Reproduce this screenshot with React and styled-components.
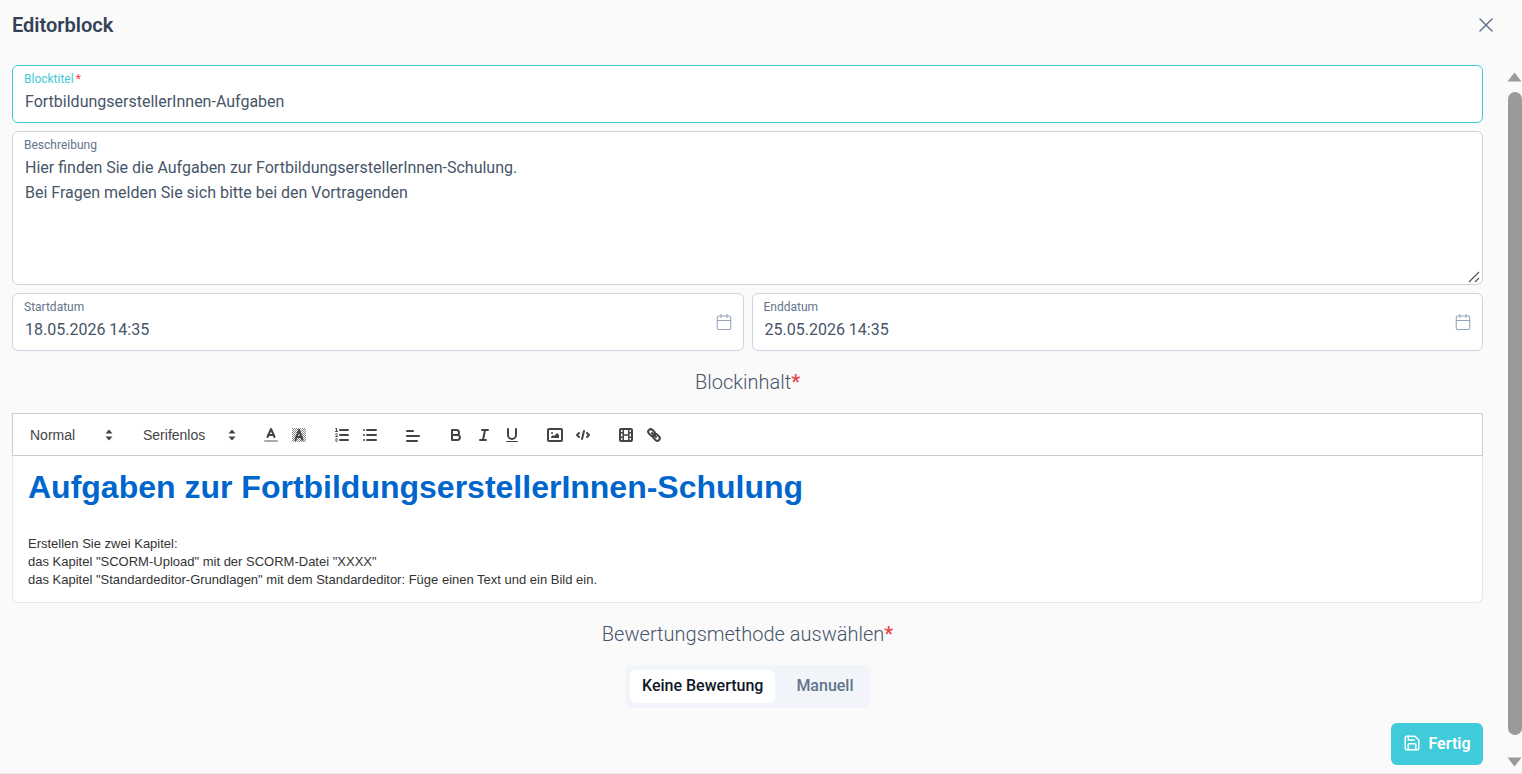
import React from "react";
import styled, { createGlobalStyle } from "styled-components";
import { X, Calendar, Save } from "lucide-react";

const GlobalStyle = createGlobalStyle`
  html, body {
    margin: 0;
    height: 100%;
    overflow: hidden;
    background: #fafafb;
    font-family: Roboto, "Liberation Sans", sans-serif;
  }
  * { box-sizing: border-box; }
`;

const Page = styled.div`
  width: 1522px;
  height: 774px;
  display: flex;
  flex-direction: column;
  background: #fafafb;
  border-bottom: 1px solid #e5e7eb;
`;

const Header = styled.header`
  height: 50px;
  flex: none;
  display: flex;
  align-items: center;
  justify-content: space-between;
  padding: 0 24px 0 12px;
`;

const Title = styled.h1`
  margin: 0;
  font-size: 20px;
  line-height: 28px;
  font-weight: 600;
  color: #334155;
`;

const CloseButton = styled.button`
  display: flex;
  padding: 0;
  border: 0;
  background: none;
  color: #64748b;
`;

const Body = styled.div`
  flex: 1;
  display: flex;
  min-height: 0;
`;

const Form = styled.main`
  width: 1483px;
  flex: none;
  padding: 15px 0 0 12px;
  display: flex;
  flex-direction: column;
  gap: 8px;
`;

const Field = styled.div`
  position: relative;
  flex: ${(p) => (p.$grow ? 1 : "none")};
  height: ${(p) => p.$height || 58}px;
  padding: 5px 11px 0 11px;
  background: #fff;
  border: 1px solid ${(p) => (p.$focused ? "#3ecad9" : "#cbd5e1")};
  border-radius: 6px;
`;

const FieldLabel = styled.label`
  display: block;
  font-size: 12px;
  line-height: 16px;
  margin-bottom: 2px;
  color: ${(p) => (p.$focused ? "#3ecad9" : "#64748b")};
`;

const Star = styled.span`
  color: #ef4444;
  margin-left: 2px;
`;

const FieldValue = styled.div`
  font-size: 16px;
  line-height: 25px;
  color: #475569;
  white-space: pre-line;
  padding-left: 1px;
`;

const DateRow = styled.div`
  display: flex;
  gap: 8px;
`;

const CalendarIcon = styled(Calendar)`
  position: absolute;
  right: 10px;
  top: 19px;
  color: #94a3b8;
`;

const ResizeGrip = styled.svg`
  position: absolute;
  right: 1px;
  bottom: 1px;
`;

const SectionLabel = styled.div`
  text-align: center;
  font-size: 20px;
  line-height: 28px;
  font-weight: 300;
  color: #475569;
  margin-top: ${(p) => p.$top}px;
  margin-bottom: ${(p) => p.$bottom}px;
`;

const SectionStar = styled.span`
  color: #ef4444;
  font-weight: 500;
`;

const Editor = styled.section`
  display: flex;
  flex-direction: column;
`;

const Toolbar = styled.div`
  height: 43px;
  display: flex;
  align-items: center;
  padding: 0 8px;
  gap: 15px;
  background: #fff;
  border: 1px solid #ccc;
`;

const ToolGroup = styled.div`
  display: flex;
  align-items: center;
`;

const Picker = styled.div`
  width: ${(p) => p.$width}px;
  height: 24px;
  display: flex;
  align-items: center;
  justify-content: space-between;
  padding: 0 6px 0 9px;
  font-family: "Liberation Sans", Arial, sans-serif;
  font-size: 14px;
  color: #444;
`;

const ToolButton = styled.button`
  width: 28px;
  height: 24px;
  padding: 3px 5px;
  border: 0;
  background: none;
  display: flex;
  align-items: center;
  justify-content: center;
  & svg {
    width: 18px;
    height: 18px;
    fill: none;
    stroke: #444;
    stroke-width: 2;
    stroke-linecap: round;
    stroke-linejoin: round;
    flex: none;
  }
  & .thin { stroke-width: 1; }
  & .solid { fill: #444; stroke: none; }
  & .speck { fill: #888; stroke: none; }
  & .hatched { stroke: none; fill: url(#hatch); }
  & .muted { stroke: #a8a8a8; }
`;

const EditorContent = styled.div`
  height: 147px;
  padding: 12px 15px;
  background: #fff;
  border: 1px solid #e2e8f0;
  border-top: 0;
  border-radius: 0 0 6px 6px;
  font-family: "Liberation Sans", Arial, sans-serif;
  font-size: 13px;
  line-height: 18px;
  color: #333;
`;

const EditorHeading = styled.h1`
  margin: 0 0 29px;
  font-size: 32px;
  line-height: 38px;
  font-weight: 700;
  color: #0066cc;
`;

const Segmented = styled.div`
  align-self: center;
  width: 245px;
  height: 43px;
  padding: 5px;
  display: flex;
  gap: 9px;
  background: #f1f5f9;
  border-radius: 6px;
`;

const Segment = styled.div`
  flex: none;
  padding: 0 12px 2px;
  display: flex;
  align-items: center;
  white-space: nowrap;
  font-size: 16px;
  font-weight: 500;
  border-radius: 6px;
  color: ${(p) => (p.$active ? "#0f172a" : "#64748b")};
  background: ${(p) => (p.$active ? "#fff" : "transparent")};
`;

const Footer = styled.div`
  display: flex;
  justify-content: flex-end;
  margin-top: 7px;
`;

const DoneButton = styled.button`
  width: 92px;
  height: 42px;
  padding: 0 0 2px;
  display: flex;
  align-items: center;
  justify-content: center;
  gap: 7px;
  border: 0;
  border-radius: 6px;
  background: #40cbdb;
  color: #fff;
  font-family: inherit;
  font-size: 16px;
  font-weight: 600;
`;

const Rail = styled.aside`
  width: 15px;
  margin-left: 24px;
  flex: none;
  display: flex;
  flex-direction: column;
  align-items: flex-end;
  padding-top: 22px;
  padding-bottom: 6px;
`;

const RailThumb = styled.div`
  width: 14px;
  flex: 1;
  margin: 10px 0 22px;
  border-radius: 7px;
  background: #9a9a9a;
`;

const ColorIcon = () => (
  <svg viewBox="0 0 18 18">
    <line className="muted" x1="3" x2="15" y1="15" y2="15" />
    <polyline points="5.5 11 9 3 12.5 11" />
    <line x1="11.63" x2="6.38" y1="9" y2="9" />
  </svg>
);

const BackgroundIcon = () => (
  <svg viewBox="0 0 18 18">
    <defs>
      <pattern id="hatch" width="2" height="2" patternUnits="userSpaceOnUse">
        <rect className="speck" width="1" height="1" />
        <rect className="speck" x="1" y="1" width="1" height="1" />
      </pattern>
    </defs>
    <rect className="hatched" x="2" y="2" width="14" height="14" />
    <polyline points="5.5 14 9 4 12.5 14" />
    <line x1="11.63" x2="6.38" y1="11" y2="11" />
  </svg>
);

const OrderedIcon = () => (
  <svg viewBox="0 0 18 18">
    <line x1="7" x2="15" y1="4" y2="4" />
    <line x1="7" x2="15" y1="9" y2="9" />
    <line x1="7" x2="15" y1="14" y2="14" />
    <line className="thin" x1="2.5" x2="4.5" y1="5.5" y2="5.5" />
    <path className="solid" d="M3.5,6A0.5,0.5,0,0,1,3,5.5V3.085l-0.276.138A0.5,0.5,0,0,1,2.053,3c-0.124-.247-0.023-0.324.224-0.447l1-.5A0.5,0.5,0,0,1,4,2.5v3A0.5,0.5,0,0,1,3.5,6Z" />
    <path className="thin" d="M4.5,10.5h-2c0-.234,1.85-1.076,1.85-2.234A0.959,0.959,0,0,0,2.5,8.156" />
    <path className="thin" d="M2.5,14.846a0.959,0.959,0,0,0,1.85-.109A0.7,0.7,0,0,0,3.75,14a0.688,0.688,0,0,0,.6-0.736,0.959,0.959,0,0,0-1.85-.109" />
  </svg>
);

const BulletIcon = () => (
  <svg viewBox="0 0 18 18">
    <line x1="6" x2="15" y1="4" y2="4" />
    <line x1="6" x2="15" y1="9" y2="9" />
    <line x1="6" x2="15" y1="14" y2="14" />
    <line x1="3" x2="3" y1="4" y2="4" />
    <line x1="3" x2="3" y1="9" y2="9" />
    <line x1="3" x2="3" y1="14" y2="14" />
  </svg>
);

const AlignIcon = () => (
  <svg viewBox="0 0 18 18">
    <line x1="3" x2="9" y1="5" y2="5" />
    <line x1="3" x2="15" y1="10" y2="10" />
    <line x1="3" x2="13" y1="15" y2="15" />
  </svg>
);

const BoldIcon = () => (
  <svg viewBox="0 0 18 18">
    <path d="M5,4H9.5A2.5,2.5,0,0,1,12,6.5v0A2.5,2.5,0,0,1,9.5,9H5A0,0,0,0,1,5,9V4A0,0,0,0,1,5,4Z" />
    <path d="M5,9h5.5A2.5,2.5,0,0,1,13,11.5v0A2.5,2.5,0,0,1,10.5,14H5a0,0,0,0,1,0,0V9A0,0,0,0,1,5,9Z" />
  </svg>
);

const ItalicIcon = () => (
  <svg viewBox="0 0 18 18">
    <line x1="7" x2="13" y1="4" y2="4" />
    <line x1="5" x2="11" y1="14" y2="14" />
    <line x1="8" x2="10" y1="14" y2="4" />
  </svg>
);

const UnderlineIcon = () => (
  <svg viewBox="0 0 18 18">
    <path d="M5,3V9a4.012,4.012,0,0,0,4,4H9a4.012,4.012,0,0,0,4-4V3" />
    <rect className="solid" x="3" y="15" width="12" height="1" rx="0.5" />
  </svg>
);

const ImageIcon = () => (
  <svg viewBox="0 0 18 18">
    <rect x="2" y="3" width="14" height="12" rx="1" />
    <circle className="solid" cx="6" cy="7" r="1" />
    <polyline className="solid" points="5 12 5 11 7 9 8 10 11 7 13 9 13 12 5 12" />
  </svg>
);

const CodeIcon = () => (
  <svg viewBox="0 0 18 18">
    <polyline points="5 7 3 9 5 11" />
    <polyline points="13 7 15 9 13 11" />
    <line x1="10" x2="8" y1="5" y2="13" />
  </svg>
);

const VideoIcon = () => (
  <svg viewBox="0 0 18 18">
    <rect x="3" y="3" width="12" height="12" rx="1" />
    <rect className="solid" x="5.5" y="3" width="1.5" height="12" />
    <rect className="solid" x="11" y="3" width="1.5" height="12" />
    <rect className="solid" x="3" y="6" width="3" height="1.5" />
    <rect className="solid" x="3" y="10.5" width="3" height="1.5" />
    <rect className="solid" x="12" y="6" width="3" height="1.5" />
    <rect className="solid" x="12" y="10.5" width="3" height="1.5" />
    <rect className="solid" x="6" y="8.25" width="6" height="1.5" />
  </svg>
);

const LinkIcon = () => (
  <svg viewBox="0 0 18 18">
    <line x1="7" x2="11" y1="7" y2="11" />
    <rect x="2.85" y="4.1" width="7.5" height="5" rx="2.5" transform="rotate(45 6.6 6.6)" />
    <rect x="7.65" y="8.9" width="7.5" height="5" rx="2.5" transform="rotate(45 11.4 11.4)" />
  </svg>
);

const PickerArrows = () => (
  <svg width="8" height="12" viewBox="0 0 8 12" fill="#444">
    <path d="M4 0.5 7.5 4.5 0.5 4.5Z" />
    <path d="M4 11.5 7.5 7.5 0.5 7.5Z" />
  </svg>
);

const toolGroups = [
  [ColorIcon, BackgroundIcon],
  [OrderedIcon, BulletIcon],
  [AlignIcon],
  [BoldIcon, ItalicIcon, UnderlineIcon],
  [ImageIcon, CodeIcon],
  [VideoIcon, LinkIcon],
];

const App = () => {
  return (
    <Page>
      <GlobalStyle />
      <Header>
        <Title>Editorblock</Title>
        <CloseButton aria-label="Schließen">
          <X size={24} strokeWidth={1.5} />
        </CloseButton>
      </Header>
      <Body>
        <Form>
          <Field $focused>
            <FieldLabel $focused>
              Blocktitel<Star>*</Star>
            </FieldLabel>
            <FieldValue>FortbildungserstellerInnen-Aufgaben</FieldValue>
          </Field>
          <Field $height={154}>
            <FieldLabel>Beschreibung</FieldLabel>
            <FieldValue>
              {"Hier finden Sie die Aufgaben zur FortbildungserstellerInnen-Schulung.\nBei Fragen melden Sie sich bitte bei den Vortragenden"}
            </FieldValue>
            <ResizeGrip width="13" height="13" viewBox="0 0 13 13" stroke="#555" strokeWidth="1.2">
              <line x1="1" y1="12" x2="11" y2="2" />
              <line x1="7" y1="12" x2="11" y2="8" />
            </ResizeGrip>
          </Field>
          <DateRow>
            <Field $grow>
              <FieldLabel>Startdatum</FieldLabel>
              <FieldValue>18.05.2026 14:35</FieldValue>
              <CalendarIcon size={18} strokeWidth={1.4} />
            </Field>
            <Field $grow>
              <FieldLabel>Enddatum</FieldLabel>
              <FieldValue>25.05.2026 14:35</FieldValue>
              <CalendarIcon size={18} strokeWidth={1.4} />
            </Field>
          </DateRow>
          <SectionLabel $top={9} $bottom={9}>
            Blockinhalt<SectionStar>*</SectionStar>
          </SectionLabel>
          <Editor>
            <Toolbar>
              <ToolGroup>
                <Picker $width={98}>
                  Normal
                  <PickerArrows />
                </Picker>
              </ToolGroup>
              <ToolGroup>
                <Picker $width={108}>
                  Serifenlos
                  <PickerArrows />
                </Picker>
              </ToolGroup>
              {toolGroups.map((group, index) => (
                <ToolGroup key={index}>
                  {group.map((Icon, i) => (
                    <ToolButton key={i}>
                      <Icon />
                    </ToolButton>
                  ))}
                </ToolGroup>
              ))}
            </Toolbar>
            <EditorContent>
              <EditorHeading>Aufgaben zur FortbildungserstellerInnen-Schulung</EditorHeading>
              Erstellen Sie zwei Kapitel:
              <br />
              das Kapitel "SCORM-Upload" mit der SCORM-Datei "XXXX"
              <br />
              das Kapitel "Standardeditor-Grundlagen" mit dem Standardeditor: Füge einen Text und ein Bild ein.
            </EditorContent>
          </Editor>
          <SectionLabel $top={9} $bottom={9}>
            Bewertungsmethode auswählen<SectionStar>*</SectionStar>
          </SectionLabel>
          <Segmented>
            <Segment $active>Keine Bewertung</Segment>
            <Segment>Manuell</Segment>
          </Segmented>
          <Footer>
            <DoneButton>
              <Save size={18} strokeWidth={2} />
              Fertig
            </DoneButton>
          </Footer>
        </Form>
        <Rail>
          <svg width="15" height="10" viewBox="0 0 15 10" fill="#9a9a9a">
            <path d="M7.5 0.5 14.5 9.5 0.5 9.5Z" />
          </svg>
          <RailThumb />
          <svg width="15" height="10" viewBox="0 0 15 10" fill="#9a9a9a">
            <path d="M7.5 9.5 14.5 0.5 0.5 0.5Z" />
          </svg>
        </Rail>
      </Body>
    </Page>
  );
};

export default App;
